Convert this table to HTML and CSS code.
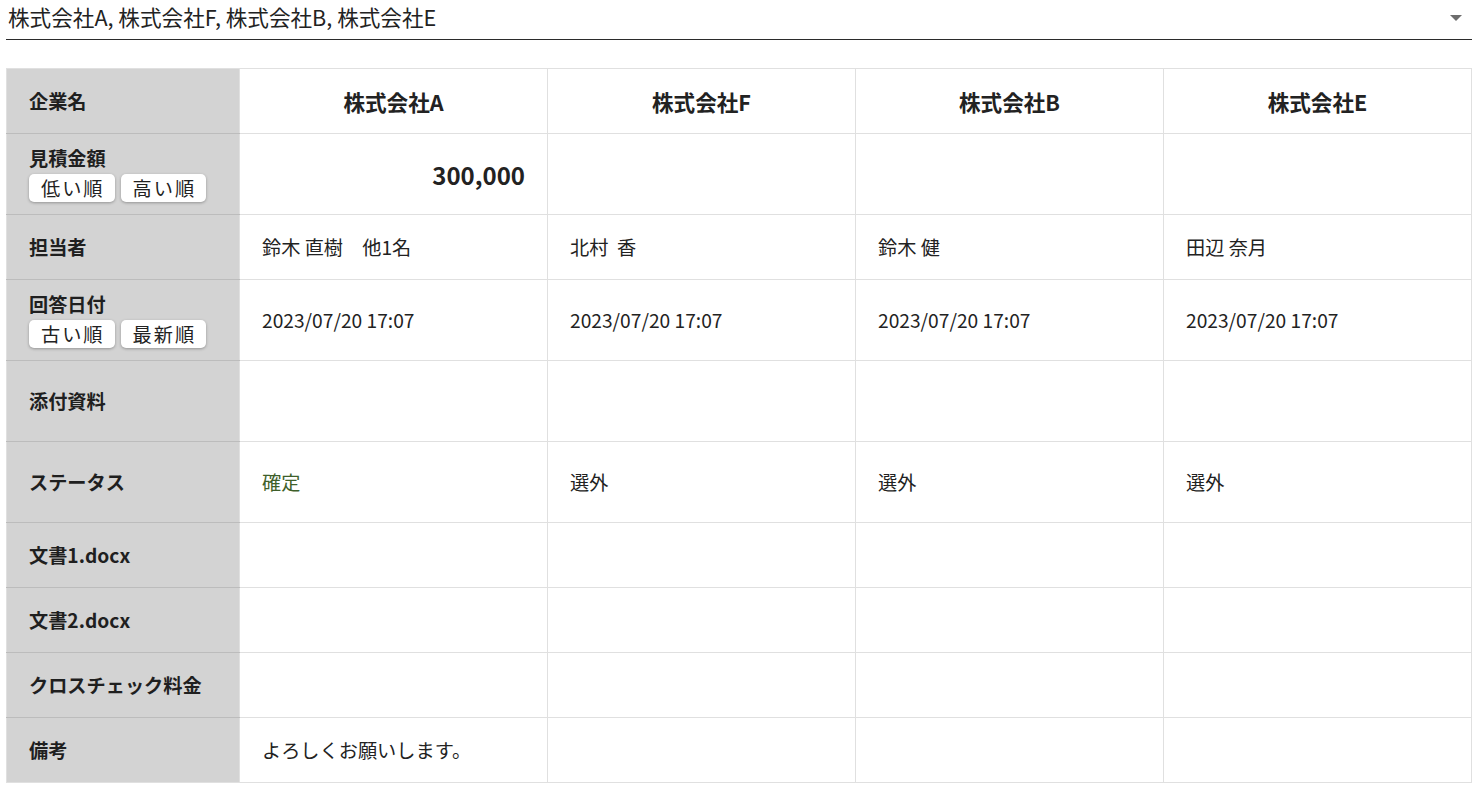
FILE: index.html
```html
<!DOCTYPE html>
<html lang="ja">
<head>
<meta charset="utf-8">
<link rel="stylesheet" href="styles.css">
</head>
<body>
<div class="select">
  <span class="select-value">株式会社A, 株式会社F, 株式会社B, 株式会社E</span>
  <span class="select-arrow"></span>
</div>
<table class="compare">
  <colgroup>
    <col class="col-head">
    <col class="col-data"><col class="col-data"><col class="col-data"><col class="col-data">
  </colgroup>
  <tr class="row-s">
    <th>企業名</th>
    <td class="company">株式会社A</td>
    <td class="company">株式会社F</td>
    <td class="company">株式会社B</td>
    <td class="company">株式会社E</td>
  </tr>
  <tr class="row-l">
    <th>見積金額<div class="sort"><button class="sort-btn">低い順</button><button class="sort-btn">高い順</button></div></th>
    <td class="amount">300,000</td><td></td><td></td><td></td>
  </tr>
  <tr class="row-s">
    <th>担当者</th>
    <td>鈴木 直樹　他1名</td><td>北村&nbsp; 香</td><td>鈴木 健</td><td>田辺 奈月</td>
  </tr>
  <tr class="row-l">
    <th>回答日付<div class="sort"><button class="sort-btn">古い順</button><button class="sort-btn">最新順</button></div></th>
    <td>2023/07/20 17:07</td><td>2023/07/20 17:07</td><td>2023/07/20 17:07</td><td>2023/07/20 17:07</td>
  </tr>
  <tr class="row-l">
    <th>添付資料</th><td></td><td></td><td></td><td></td>
  </tr>
  <tr class="row-l">
    <th>ステータス</th>
    <td class="status-ok">確定</td><td>選外</td><td>選外</td><td>選外</td>
  </tr>
  <tr class="row-s"><th>文書1.docx</th><td></td><td></td><td></td><td></td></tr>
  <tr class="row-s"><th>文書2.docx</th><td></td><td></td><td></td><td></td></tr>
  <tr class="row-s"><th>クロスチェック料金</th><td></td><td></td><td></td><td></td></tr>
  <tr class="row-s"><th>備考</th><td>よろしくお願いします。</td><td></td><td></td><td></td></tr>
</table>
</body>
</html>
```

FILE: styles.css
```css
html, body {
  margin: 0;
  padding: 0;
  background: #ffffff;
}
body {
  font-family: "Noto Sans CJK JP", "Noto Sans", sans-serif;
  color: #212121;
  padding: 0 11px 0 6px;
}
.select {
  display: flex;
  align-items: center;
  justify-content: space-between;
  height: 39px;
  border-bottom: 1px solid #2b2b2b;
  padding: 0 10px 0 2px;
}
.select-value {
  font-size: 21.6px;
  color: #222;
  line-height: 1;
  margin-bottom: 5px;
}
.select-arrow {
  width: 0;
  height: 0;
  border-left: 6px solid transparent;
  border-right: 6px solid transparent;
  border-top: 6px solid #6d6d6d;
  margin-bottom: 4px;
}
.compare {
  margin-top: 28px;
  width: 1466px;
  border-collapse: collapse;
  table-layout: fixed;
}
.col-head { width: 233px; }
.col-data { width: 308px; }
.compare th {
  background: #d3d3d3;
  text-align: left;
  font-weight: 700;
  font-size: 19.2px;
  line-height: 1.3;
  padding: 0 0 0 22px;
  border-top: 1px solid #bcbcbc;
  border-bottom: 1px solid #bcbcbc;
  border-left: 1px solid #e0e0e0;
  color: #1f1f1f;
}
.compare tr:first-child th { border-top-color: #e0e0e0; }
.compare tr:last-child th { border-bottom-color: #e0e0e0; }
.compare td {
  border: 1px solid #e0e0e0;
  font-size: 19.2px;
  padding: 0 22px;
  color: #222;
}
.row-s { height: 65px; }
.row-l { height: 81px; }
.company {
  text-align: center;
  font-weight: 700;
  font-size: 21.6px !important;
}
.amount {
  text-align: right;
  font-weight: 700;
  font-size: 24px !important;
  padding-right: 22px !important;
}
.status-ok { color: #3e5f2a !important; }
.sort {
  display: flex;
  gap: 6px;
  margin-top: 3px;
}
.sort-btn {
  font-family: inherit;
  font-size: 19.2px;
  letter-spacing: 2px;
  background: #fff;
  border: none;
  border-radius: 5px;
  box-shadow: 0 1px 3px rgba(0,0,0,0.3);
  padding: 0 10px 0 12px;
  height: 28px;
  line-height: 28px;
  color: #222;
}
```
